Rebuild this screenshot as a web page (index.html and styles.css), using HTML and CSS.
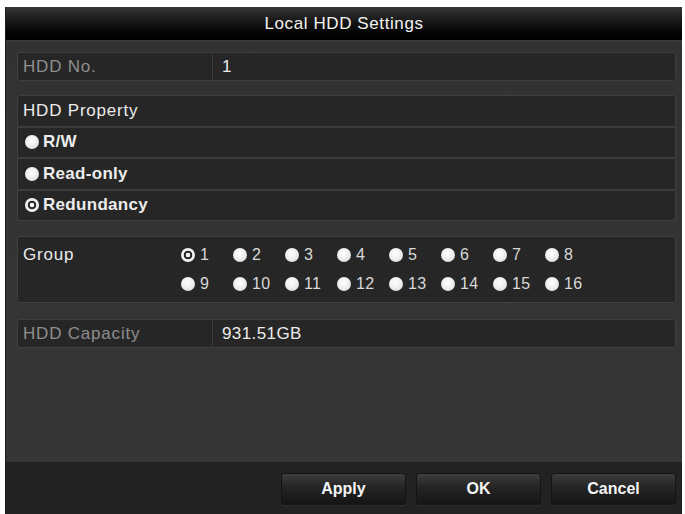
FILE: index.html
```html
<!DOCTYPE html>
<html>
<head>
<meta charset="utf-8">
<link rel="stylesheet" href="styles.css">
</head>
<body>
<div class="dialog">
  <div class="titlebar">Local HDD Settings</div>
  <div class="content">
    <div class="field">
      <div class="label dim">HDD No.</div>
      <div class="value">1</div>
    </div>
    <div class="box">
      <div class="cell">HDD Property</div>
      <div class="cell opt"><span class="radio"></span>R/W</div>
      <div class="cell opt"><span class="radio"></span>Read-only</div>
      <div class="cell opt"><span class="radio on"></span>Redundancy</div>
    </div>
    <div class="group">
      <div class="group-label">Group</div>
      <div class="group-grid">
        <div class="gitem"><span class="radio on"></span>1</div>
        <div class="gitem"><span class="radio"></span>2</div>
        <div class="gitem"><span class="radio"></span>3</div>
        <div class="gitem"><span class="radio"></span>4</div>
        <div class="gitem"><span class="radio"></span>5</div>
        <div class="gitem"><span class="radio"></span>6</div>
        <div class="gitem"><span class="radio"></span>7</div>
        <div class="gitem"><span class="radio"></span>8</div>
        <div class="gitem"><span class="radio"></span>9</div>
        <div class="gitem"><span class="radio"></span>10</div>
        <div class="gitem"><span class="radio"></span>11</div>
        <div class="gitem"><span class="radio"></span>12</div>
        <div class="gitem"><span class="radio"></span>13</div>
        <div class="gitem"><span class="radio"></span>14</div>
        <div class="gitem"><span class="radio"></span>15</div>
        <div class="gitem"><span class="radio"></span>16</div>
      </div>
    </div>
    <div class="field">
      <div class="label dim">HDD Capacity</div>
      <div class="value">931.51GB</div>
    </div>
  </div>
  <div class="footer">
    <button class="btn">Apply</button>
    <button class="btn">OK</button>
    <button class="btn">Cancel</button>
  </div>
</div>
</body>
</html>
```

FILE: styles.css
```css
html, body {
  margin: 0;
  padding: 0;
  background: #ffffff;
}
body {
  padding: 7px 0 0 5px;
  font-family: "Liberation Sans", Arial, sans-serif;
  font-size: 17px;
  color: #ececec;
}
.dialog {
  width: 677px;
  height: 507px;
  background: #333333;
  display: flex;
  flex-direction: column;
  border-left: 1px solid #1e1e1e;
  box-sizing: border-box;
}
.titlebar {
  height: 33px;
  flex: none;
  display: flex;
  align-items: center;
  justify-content: center;
  background: linear-gradient(#363636 0%, #161616 45%, #030303 80%, #000 100%);
  color: #f2f2f2;
  font-size: 17px;
  letter-spacing: 0.6px;
  border-bottom: 2px solid #3a3a3a;
}
.content {
  flex: 1;
  padding: 10px 6px 0 11px;
  display: flex;
  flex-direction: column;
  background: linear-gradient(#323232, #363636);
}
.field {
  height: 29px;
  display: flex;
  background: #262626;
  border: 1px solid #3f3f3f;
  border-radius: 3px;
  box-sizing: border-box;
  margin-bottom: 14px;
}
.field:last-child { margin-top: 2px; }
.label {
  width: 195px;
  flex: none;
  display: flex;
  align-items: center;
  padding-left: 5px;
  box-sizing: border-box;
  border-right: 1px solid #3c3c3c;
  letter-spacing: 0.8px;
}
.dim { color: #8e8e8e; }
.value {
  display: flex;
  align-items: center;
  padding-left: 9px;
  letter-spacing: 0.4px;
}
.box {
  display: flex;
  flex-direction: column;
  gap: 2px;
  background: #3b3b3b;
  border: 1px solid #3f3f3f;
  border-radius: 3px;
  margin-bottom: 15px;
}
.cell {
  height: 29.5px;
  background: #262626;
  display: flex;
  align-items: center;
  padding-left: 5px;
  letter-spacing: 0.8px;
}
.cell:first-child { border-radius: 3px 3px 0 0; }
.cell:last-child { border-radius: 0 0 3px 3px; }
.opt {
  font-weight: bold;
  gap: 4px;
  padding-left: 7px;
  letter-spacing: 0.3px;
}
.radio {
  width: 14px;
  height: 14px;
  border-radius: 50%;
  flex: none;
  background: radial-gradient(circle at 45% 40%, #ffffff 0, #f0f0f0 45%, #cfcfcf 100%);
}
.radio.on {
  background: radial-gradient(circle, #f4f4f4 0 2px, #262626 2.6px 4px, #f0f0f0 4.6px);
}
.group {
  height: 67px;
  box-sizing: border-box;
  background: #262626;
  border: 1px solid #3f3f3f;
  border-radius: 3px;
  display: flex;
  padding-top: 3px;
  margin-bottom: 14px;
}
.group-label {
  width: 163px;
  flex: none;
  height: 29px;
  display: flex;
  align-items: center;
  padding-left: 5px;
  box-sizing: border-box;
  letter-spacing: 0.8px;
}
.group-grid {
  display: grid;
  grid-template-columns: repeat(8, 52px);
  grid-auto-rows: 29px;
}
.gitem {
  display: flex;
  align-items: center;
  gap: 5px;
  color: #d8d8d8;
  font-size: 16px;
  letter-spacing: 0.4px;
}
.footer {
  height: 52px;
  flex: none;
  background: #222222;
  display: flex;
  justify-content: flex-end;
  align-items: flex-start;
  padding: 11px 6px 0 0;
  box-sizing: border-box;
  gap: 10px;
}
.btn {
  width: 125px;
  height: 32px;
  border: 1px solid #141414;
  border-radius: 3px;
  background: linear-gradient(#3d3d3d 0%, #262626 40%, #151515 100%);
  color: #f4f4f4;
  font-family: "Liberation Sans", Arial, sans-serif;
  font-size: 16px;
  font-weight: bold;
  padding: 0;
  box-shadow: 0 1px 0 #2c2c2c;
}
```
